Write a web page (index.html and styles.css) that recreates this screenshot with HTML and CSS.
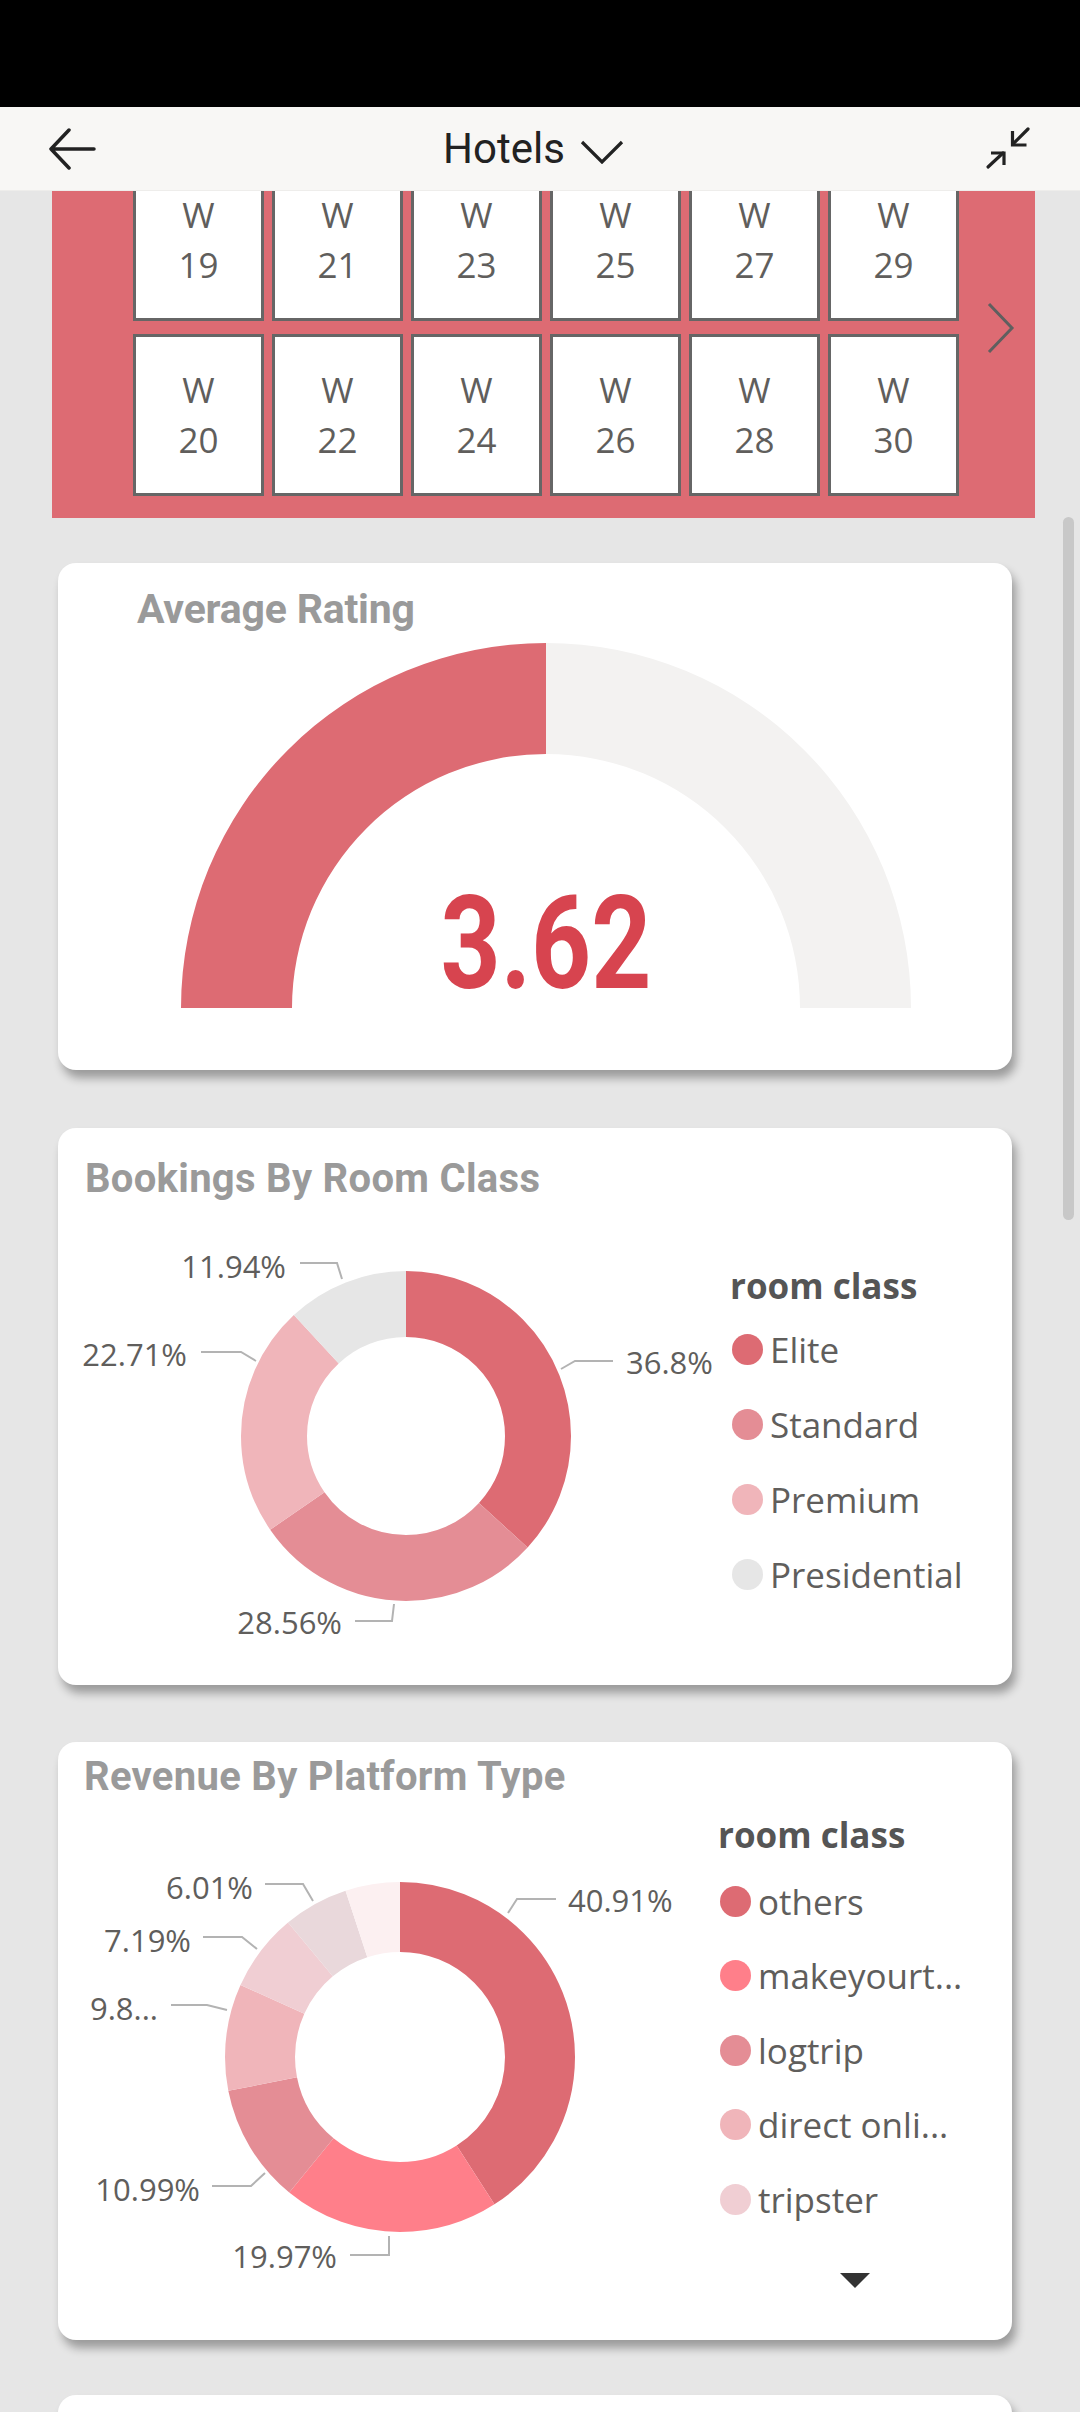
FILE: index.html
```html
<!DOCTYPE html>
<html lang="en">
<head>
<meta charset="utf-8">
<title>Hotels</title>
<link rel="stylesheet" href="styles.css">
</head>
<body>
<div class="status"></div>
<header class="appbar">
  <svg class="icon-back" width="48" height="42" viewBox="0 0 48 42"><path d="M46 21H3M21 2L3 21l18 19" fill="none" stroke="#222" stroke-width="3.5" stroke-linecap="round" stroke-linejoin="round"/></svg>
  <div class="app-title"><span>Hotels</span><svg width="44" height="24" viewBox="0 0 44 24"><polyline points="2,2 22,22 42,2" fill="none" stroke="#222" stroke-width="3.2"/></svg></div>
  <svg class="icon-compress" width="47" height="44" viewBox="0 0 47 44"><g fill="none" stroke="#222" stroke-width="3.2" stroke-linecap="round"><path d="M43 3L28 18"/><path d="M27.5 5v14h14" stroke-linecap="butt"/><path d="M3 41l15-14"/><path d="M6 27h13v12" stroke-linecap="butt"/></g></svg>
</header>
<main class="viewport">
  <div class="report">
    <section class="slicer">
      <div class="tiles">
        <div class="tile"><span>W</span><span>19</span></div>
        <div class="tile"><span>W</span><span>20</span></div>
        <div class="tile"><span>W</span><span>21</span></div>
        <div class="tile"><span>W</span><span>22</span></div>
        <div class="tile"><span>W</span><span>23</span></div>
        <div class="tile"><span>W</span><span>24</span></div>
        <div class="tile"><span>W</span><span>25</span></div>
        <div class="tile"><span>W</span><span>26</span></div>
        <div class="tile"><span>W</span><span>27</span></div>
        <div class="tile"><span>W</span><span>28</span></div>
        <div class="tile"><span>W</span><span>29</span></div>
        <div class="tile"><span>W</span><span>30</span></div>
      </div>
      <svg class="next" width="28" height="52" viewBox="0 0 28 52"><polyline points="2,2 25,26 2,50" fill="none" stroke="#5f5f5f" stroke-width="3"/></svg>
    </section>

    <section class="card gauge-card">
      <h2 class="card-title">Average Rating</h2>
      <svg class="gauge" width="954" height="437" viewBox="0 0 954 437">
        <path d="M123 375A365 365 0 0 1 488 10L488 121A254 254 0 0 0 234 375Z" fill="#dd6b73"/>
        <path d="M488 10A365 365 0 0 1 853 375L742 375A254 254 0 0 0 488 121Z" fill="#f3f2f1"/>
        <text class="kpi" x="488" y="355" text-anchor="middle" textLength="211" lengthAdjust="spacingAndGlyphs">3.62</text>
      </svg>
    </section>

    <section class="card rooms">
      <h2 class="card-title">Bookings By Room Class</h2>
      <div class="card-body">
        <svg class="chart" width="672" height="482" viewBox="0 0 672 482">
          <g fill="none" stroke-width="66" transform="rotate(-90 348 233)">
            <circle cx="348" cy="233" r="132" stroke="#dd6b73" stroke-dasharray="305.21 829.38" stroke-dashoffset="0"/>
            <circle cx="348" cy="233" r="132" stroke="#e48d95" stroke-dasharray="236.87 829.38" stroke-dashoffset="-305.21"/>
            <circle cx="348" cy="233" r="132" stroke="#f0b5ba" stroke-dasharray="188.35 829.38" stroke-dashoffset="-542.08"/>
            <circle cx="348" cy="233" r="132" stroke="#e6e6e6" stroke-dasharray="98.95 829.38" stroke-dashoffset="-730.43"/>
          </g>
          <g class="leader">
            <polyline points="503,166 517,158 555,158"/>
            <polyline points="143,149 183,149 198,158"/>
            <polyline points="242,60 279,60 284,76"/>
            <polyline points="297,418 334,418 336,401"/>
          </g>
          <text class="lbl" x="568" y="171">36.8%</text>
          <text class="lbl" x="129" y="163" text-anchor="end">22.71%</text>
          <text class="lbl" x="228" y="75" text-anchor="end">11.94%</text>
          <text class="lbl" x="284" y="431" text-anchor="end">28.56%</text>
        </svg>
        <div class="legend legend-rooms">
          <div class="legend-title">room class</div>
          <div class="legend-item"><span class="dot c1"></span>Elite</div>
          <div class="legend-item"><span class="dot c3"></span>Standard</div>
          <div class="legend-item"><span class="dot c4"></span>Premium</div>
          <div class="legend-item"><span class="dot c-grey"></span>Presidential</div>
        </div>
      </div>
    </section>

    <section class="card platforms">
      <h2 class="card-title">Revenue By Platform Type</h2>
      <div class="card-body">
        <svg class="chart" width="660" height="539" viewBox="0 0 660 539">
          <g fill="none" stroke-width="70" transform="rotate(-90 342 256)">
            <circle cx="342" cy="256" r="140" stroke="#dd6b73" stroke-dasharray="359.87 879.65" stroke-dashoffset="0"/>
            <circle cx="342" cy="256" r="140" stroke="#ff7f8a" stroke-dasharray="175.67 879.65" stroke-dashoffset="-359.87"/>
            <circle cx="342" cy="256" r="140" stroke="#e48d95" stroke-dasharray="96.67 879.65" stroke-dashoffset="-535.54"/>
            <circle cx="342" cy="256" r="140" stroke="#f0b5ba" stroke-dasharray="86.65 879.65" stroke-dashoffset="-632.21"/>
            <circle cx="342" cy="256" r="140" stroke="#f0ced3" stroke-dasharray="63.25 879.65" stroke-dashoffset="-718.86"/>
            <circle cx="342" cy="256" r="140" stroke="#e9d8db" stroke-dasharray="52.87 879.65" stroke-dashoffset="-782.11"/>
            <circle cx="342" cy="256" r="140" stroke="#fcf0f1" stroke-dasharray="44.67 879.65" stroke-dashoffset="-834.98"/>
          </g>
          <g class="leader">
            <polyline points="450,112 459,98 498,98"/>
            <polyline points="207,83 245,83 255,100"/>
            <polyline points="145,136 184,136 199,148"/>
            <polyline points="113,204 149,204 169,209"/>
            <polyline points="154,385 193,385 207,372"/>
            <polyline points="292,454 331,454 331,435"/>
          </g>
          <text class="lbl" x="510" y="111">40.91%</text>
          <text class="lbl" x="195" y="98" text-anchor="end">6.01%</text>
          <text class="lbl" x="133" y="151" text-anchor="end">7.19%</text>
          <text class="lbl" x="100" y="219" text-anchor="end">9.8...</text>
          <text class="lbl" x="142" y="400" text-anchor="end">10.99%</text>
          <text class="lbl" x="279" y="467" text-anchor="end">19.97%</text>
        </svg>
        <div class="legend legend-platforms">
          <div class="legend-title">room class</div>
          <div class="legend-item"><span class="dot c1"></span>others</div>
          <div class="legend-item"><span class="dot c2"></span>makeyourt...</div>
          <div class="legend-item"><span class="dot c3"></span>logtrip</div>
          <div class="legend-item"><span class="dot c4"></span>direct onli...</div>
          <div class="legend-item"><span class="dot c5"></span>tripster</div>
          <div class="more"></div>
        </div>
      </div>
    </section>

    <section class="card peek"></section>
  </div>
  <div class="scrollbar"></div>
</main>
</body>
</html>
```

FILE: styles.css
```css
html, body {
  margin: 0;
  padding: 0;
}
body {
  width: 1080px;
  height: 2412px;
  overflow: hidden;
  background: #e6e6e6;
  font-family: "Open Sans", "Noto Sans", sans-serif;
}
.status {
  height: 107px;
  background: #000;
}
.appbar {
  height: 84px;
  box-sizing: border-box;
  padding: 0 48px 0 48px;
  background: #f8f7f5;
  display: flex;
  align-items: center;
  border-bottom: 1px solid #eeedeb;
}
.icon-back {
  flex: none;
}
.app-title {
  flex: 1;
  display: flex;
  justify-content: center;
  align-items: center;
  gap: 15px;
  padding-right: 14px;
  font: 400 42px/50px Roboto, sans-serif;
  color: #222;
}
.app-title svg {
  margin-top: 6px;
}
.icon-compress {
  flex: none;
  margin-top: -2px;
}
.viewport {
  position: relative;
  height: 2221px;
  overflow: hidden;
}
.report {
  margin-top: -54px;
  padding-left: 52px;
}
.slicer {
  width: 983px;
  box-sizing: border-box;
  padding: 22px 0 22px 81px;
  background: #dd6b73;
  display: flex;
  align-items: center;
}
.tiles {
  display: grid;
  grid-template-columns: repeat(6, 131px);
  grid-template-rows: repeat(2, 162px);
  grid-auto-flow: column;
  column-gap: 8px;
  row-gap: 13px;
}
.tile {
  box-sizing: border-box;
  background: #fff;
  border: 3px solid #666;
  display: flex;
  flex-direction: column;
  align-items: center;
  justify-content: center;
  font-size: 35px;
  line-height: 50px;
  color: #605e5c;
}
.next {
  margin-left: 28px;
}
.card {
  width: 954px;
  margin-left: 6px;
  box-sizing: border-box;
  background: #fff;
  border-radius: 18px;
  box-shadow: 4px 8px 10px rgba(0, 0, 0, 0.33);
}
.card-title {
  margin: 0;
  font: 700 40px/48px Roboto, sans-serif;
  color: #9a9a9a;
  letter-spacing: 0.3px;
}
.gauge-card {
  margin-top: 45px;
  height: 507px;
}
.gauge-card .card-title {
  padding: 22px 0 0 79px;
  font-size: 41px;
  letter-spacing: -0.2px;
}
.gauge {
  display: block;
}
.kpi {
  font: 700 129px Roboto, sans-serif;
  fill: #d7444f;
}
.rooms {
  margin-top: 58px;
  height: 557px;
}
.rooms .card-title {
  padding: 27px 0 0 27px;
}
.platforms {
  margin-top: 57px;
  height: 598px;
}
.platforms .card-title {
  padding: 11px 0 0 26px;
}
.peek {
  margin-top: 55px;
  height: 300px;
}
.card-body {
  display: flex;
  align-items: flex-start;
}
.chart {
  display: block;
  flex: none;
}
.leader polyline {
  fill: none;
  stroke: #b3b3b3;
  stroke-width: 2;
}
.lbl {
  font: 400 31px "Open Sans", sans-serif;
  fill: #605e5c;
}
.legend {
  display: flex;
  flex-direction: column;
}
.legend-rooms {
  margin-top: 58px;
}
.legend-platforms {
  margin-top: 9px;
}
.legend-title {
  font: 700 35px/50px "Open Sans", sans-serif;
  color: #555;
}
.legend-item {
  display: flex;
  align-items: center;
  height: 75px;
  font-size: 35px;
  color: #605e5c;
  white-space: nowrap;
}
.legend-rooms .legend-title {
  margin-bottom: 1px;
}
.legend-platforms .legend-title {
  margin-bottom: 4px;
}
.legend-platforms .legend-item {
  height: 74.5px;
}
.dot {
  flex: none;
  width: 31px;
  height: 31px;
  border-radius: 50%;
  margin: 0 7px 0 2px;
}
.c1 { background: #dd6b73; }
.c2 { background: #ff7f8a; }
.c3 { background: #e48d95; }
.c4 { background: #f0b5ba; }
.c5 { background: #f0ced3; }
.c-grey { background: #e6e6e6; }
.more {
  width: 0;
  height: 0;
  margin: 36px 0 0 122px;
  border-left: 15.5px solid transparent;
  border-right: 15.5px solid transparent;
  border-top: 15px solid #333;
}
.scrollbar {
  position: absolute;
  top: 326px;
  left: 1063px;
  width: 11px;
  height: 703px;
  border-radius: 6px;
  background: #c8c8c8;
}
```
